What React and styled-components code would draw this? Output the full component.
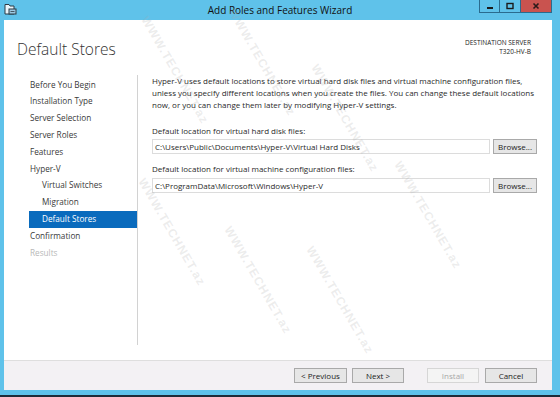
import styled, { createGlobalStyle } from 'styled-components';

const GlobalStyle = createGlobalStyle`
  html, body {
    margin: 0;
    padding: 0;
    background: #ffffff;
  }
  body {
    font-family: 'Open Sans', 'Noto Sans', sans-serif;
    color: #222;
  }
`;

const Window = styled.div`
  width: 560px;
  height: 397px;
  box-sizing: border-box;
  background: #5fc2ea;
  border-bottom: 2px solid #1f2c38;
  padding: 0 8px 5px 4px;
  display: flex;
  flex-direction: column;
  position: relative;
  overflow: hidden;
`;

const TitleBar = styled.div`
  height: 20px;
  display: flex;
  align-items: flex-start;
  position: relative;
  margin-right: -8px;
  margin-left: -4px;
`;

const AppIcon = styled.svg`
  margin: 3px 0 0 4px;
`;

const Title = styled.div`
  position: absolute;
  left: 0;
  right: 0;
  top: 3px;
  text-align: center;
  font-size: 10px;
  line-height: 14px;
  color: #111;
`;

const Caption = styled.div`
  margin-left: auto;
  margin-right: 8px;
  display: flex;
  height: 13px;
  border: 1px solid #2a6b8e;
  border-top: none;
  box-sizing: border-box;
`;

const CapButton = styled.div`
  width: ${(p) => p.$w}px;
  height: 100%;
  background: ${(p) => (p.$close ? '#c9534f' : 'transparent')};
  border-left: ${(p) => (p.$first ? 'none' : '1px solid #2a6b8e')};
  display: flex;
  align-items: center;
  justify-content: center;
`;

const Body = styled.div`
  flex: 1;
  background: #ffffff;
  display: flex;
  flex-direction: column;
`;

const Header = styled.div`
  height: 55px;
  display: flex;
  justify-content: space-between;
  padding: 0 21px 0 13px;
`;

const PageTitle = styled.div`
  font-size: 15.5px;
  font-weight: 300;
  color: #333;
  margin-top: 17px;
  line-height: 24px;
`;

const Destination = styled.div`
  margin-top: 18px;
  text-align: right;
  font-size: 6.5px;
  line-height: 9px;
  color: #222;
`;

const Main = styled.div`
  flex: 1;
  display: flex;
  padding-bottom: 15px;
`;

const Sidebar = styled.div`
  width: 133px;
  flex-shrink: 0;
  border-right: 1px solid #d2d2d2;
  padding-top: 1.6px;
`;

const NavItem = styled.div`
  height: 16.8px;
  line-height: 16.8px;
  margin-left: 25px;
  padding-left: ${(p) => (p.$sub ? 13 : 1)}px;
  font-size: 8.2px;
  color: ${(p) => (p.$active ? '#ffffff' : p.$disabled ? '#b8b8b8' : '#3a3a3a')};
  background: ${(p) => (p.$active ? '#0a6bbd' : 'transparent')};
  white-space: nowrap;
`;

const Content = styled.div`
  flex: 1;
  min-width: 0;
  padding: 0 15px 0 14px;
  font-size: 8px;
  color: #2a2a2a;
`;

const Intro = styled.p`
  margin: 0;
  line-height: 12px;
  white-space: nowrap;
`;

const Label = styled.div`
  margin-top: ${(p) => p.$top}px;
  line-height: 12px;
`;

const PathRow = styled.div`
  margin-top: ${(p) => p.$top}px;
  display: flex;
  gap: 3px;
  align-items: center;
`;

const PathInput = styled.div`
  flex: 1;
  height: 15px;
  box-sizing: border-box;
  border: 1px solid #dcdcdc;
  padding-left: 2px;
  line-height: 13px;
  white-space: nowrap;
`;

const Button = styled.div`
  width: ${(p) => p.$w}px;
  height: 15px;
  box-sizing: border-box;
  border: 1px solid ${(p) => (p.$disabled ? '#d6d6d6' : '#a9a9a9')};
  background: ${(p) => (p.$disabled ? '#f4f4f4' : '#e6e6e6')};
  color: ${(p) => (p.$disabled ? '#a8a8a8' : '#222')};
  font-size: 8px;
  line-height: 13px;
  text-align: center;
`;

const Footer = styled.div`
  height: 30px;
  box-sizing: border-box;
  background: #f3f1f4;
  border-top: 1px solid #dedede;
  display: flex;
  align-items: center;
  justify-content: flex-end;
  padding: 0 15px 0 0;
`;

const ButtonGroup = styled.div`
  display: flex;
  gap: ${(p) => p.$gap}px;
  margin-left: ${(p) => p.$left || 0}px;
`;

const Watermark = styled.div`
  position: absolute;
  left: ${(p) => p.$x}px;
  top: ${(p) => p.$y}px;
  transform: translate(-50%, -50%) rotate(60deg);
  font-family: 'Liberation Sans', sans-serif;
  font-weight: bold;
  font-size: 12px;
  letter-spacing: 1px;
  color: rgba(170, 170, 170, 0.22);
  white-space: nowrap;
  pointer-events: none;
`;

const navItems = [
  { label: 'Before You Begin' },
  { label: 'Installation Type' },
  { label: 'Server Selection' },
  { label: 'Server Roles' },
  { label: 'Features' },
  { label: 'Hyper-V' },
  { label: 'Virtual Switches', sub: true },
  { label: 'Migration', sub: true },
  { label: 'Default Stores', sub: true, active: true },
  { label: 'Confirmation' },
  { label: 'Results', disabled: true },
];

const marks = [
  [175, 70],
  [262, 62],
  [345, 118],
  [172, 232],
  [258, 280],
  [340, 300],
  [428, 215],
];

export default function App() {
  return (
    <>
      <GlobalStyle />
      <Window>
        <TitleBar>
          <AppIcon width="13" height="12" viewBox="0 0 13 12">
            <path d="M1 1.5 H5 L6 3 H10 V11 H1 Z" fill="#eaf6fc" stroke="#2d3a44" strokeWidth="1" />
            <rect x="5" y="6" width="7" height="5" fill="#9cc9e3" stroke="#2d3a44" strokeWidth="1" />
            <line x1="6.5" y1="8.5" x2="10.5" y2="8.5" stroke="#2d3a44" strokeWidth="0.8" />
          </AppIcon>
          <Title>Add Roles and Features Wizard</Title>
          <Caption>
            <CapButton $w={19} $first>
              <svg width="8" height="8" viewBox="0 0 8 8">
                <rect x="1" y="5" width="6" height="2" fill="#1b1b1b" />
              </svg>
            </CapButton>
            <CapButton $w={20}>
              <svg width="8" height="8" viewBox="0 0 8 8">
                <rect x="1" y="1.5" width="6" height="5" fill="none" stroke="#1b1b1b" strokeWidth="1.4" />
              </svg>
            </CapButton>
            <CapButton $w={30} $close>
              <svg width="8" height="8" viewBox="0 0 8 8">
                <path d="M1.5 1.5 L6.5 6.5 M6.5 1.5 L1.5 6.5" stroke="#2a1a1a" strokeWidth="1.6" />
              </svg>
            </CapButton>
          </Caption>
        </TitleBar>
        <Body>
          <Header>
            <PageTitle>Default Stores</PageTitle>
            <Destination>
              DESTINATION SERVER
              <br />
              T320-HV-B
            </Destination>
          </Header>
          <Main>
            <Sidebar>
              {navItems.map((item) => (
                <NavItem
                  key={item.label}
                  $sub={item.sub}
                  $active={item.active}
                  $disabled={item.disabled}
                >
                  {item.label}
                </NavItem>
              ))}
            </Sidebar>
            <Content>
              <Intro>
                Hyper-V uses default locations to store virtual hard disk files and virtual machine configuration files,
                <br />
                unless you specify different locations when you create the files. You can change these default locations
                <br />
                now, or you can change them later by modifying Hyper-V settings.
              </Intro>
              <Label $top={14}>Default location for virtual hard disk files:</Label>
              <PathRow $top={2}>
                <PathInput>C:\Users\Public\Documents\Hyper-V\Virtual Hard Disks</PathInput>
                <Button $w={44}>Browse...</Button>
              </PathRow>
              <Label $top={9}>Default location for virtual machine configuration files:</Label>
              <PathRow $top={3}>
                <PathInput>C:\ProgramData\Microsoft\Windows\Hyper-V</PathInput>
                <Button $w={44}>Browse...</Button>
              </PathRow>
            </Content>
          </Main>
          <Footer>
            <ButtonGroup $gap={5}>
              <Button $w={53}>&lt; Previous</Button>
              <Button $w={52}>Next &gt;</Button>
            </ButtonGroup>
            <ButtonGroup $gap={6} $left={23}>
              <Button $w={52} $disabled>Install</Button>
              <Button $w={52}>Cancel</Button>
            </ButtonGroup>
          </Footer>
        </Body>
        {marks.map(([x, y]) => (
          <Watermark key={`${x}-${y}`} $x={x} $y={y}>
            WWW.TECHNET.az
          </Watermark>
        ))}
      </Window>
    </>
  );
}
